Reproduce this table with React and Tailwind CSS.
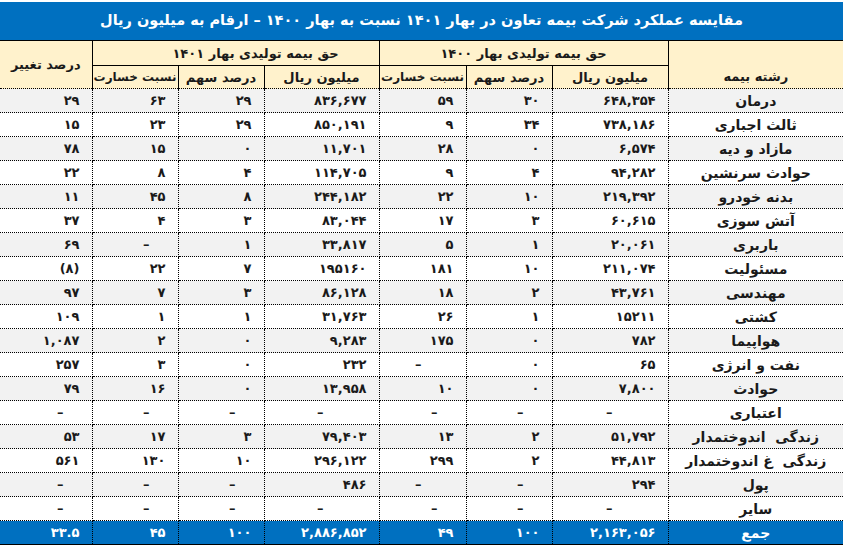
import React from "react";

const W = [92, 86, 86, 115, 87, 86, 116, 175];

// visual LTR order: change, r1401, s1401, m1401, r1400, s1400, m1400, label
const rows = [
  ["۲۹", "۶۳", "۲۹", "۸۳۶,۶۷۷", "۵۹", "۳۰", "۶۴۸,۳۵۴", "درمان"],
  ["۱۵", "۲۳", "۲۹", "۸۵۰,۱۹۱", "۹", "۳۴", "۷۳۸,۱۸۶", "ثالث اجباری"],
  ["۷۸", "۱۵", "۰", "۱۱,۷۰۱", "۲۸", "۰", "۶,۵۷۴", "مازاد و دیه"],
  ["۲۲", "۸", "۴", "۱۱۴,۷۰۵", "۹", "۴", "۹۴,۲۸۲", "حوادث سرنشین"],
  ["۱۱", "۴۵", "۸", "۲۴۴,۱۸۲", "۲۲", "۱۰", "۲۱۹,۳۹۲", "بدنه خودرو"],
  ["۳۷", "۴", "۳", "۸۳,۰۴۴", "۱۷", "۳", "۶۰,۶۱۵", "آتش سوزی"],
  ["۶۹", "–", "۱", "۳۳,۸۱۷", "۵", "۱", "۲۰,۰۶۱", "باربری"],
  ["(۸)", "۲۲", "۷", "۱۹۵۱۶۰", "۱۸۱", "۱۰", "۲۱۱,۰۷۴", "مسئولیت"],
  ["۹۷", "۷", "۳", "۸۶,۱۲۸", "۱۸", "۲", "۴۳,۷۶۱", "مهندسی"],
  ["۱۰۹", "۱", "۱", "۳۱,۷۶۳", "۲۶", "۱", "۱۵۲۱۱", "کشتی"],
  ["۱,۰۸۷", "۲", "۰", "۹,۲۸۳", "۱۷۵", "۰", "۷۸۲", "هواپیما"],
  ["۲۵۷", "۳", "۰", "۲۳۲", "–L", "۰", "۶۵", "نفت و انرژی"],
  ["۷۹", "۱۶", "۰", "۱۳,۹۵۸", "۱۰", "۰", "۷,۸۰۰", "حوادث"],
  ["–", "–", "–", "–", "–", "–", "–", "اعتباری"],
  ["۵۳", "۱۷", "۳", "۷۹,۴۰۳", "۱۳", "۲", "۵۱,۷۹۲", "زندگی\u00a0\u00a0اندوختمدار"],
  ["۵۶۱", "۱۳۰", "۱۰", "۲۹۶,۱۲۲", "۲۹۹", "۲", "۴۴,۸۱۳", "زندگی\u00a0\u00a0غ اندوختمدار"],
  ["–", "–", "–", "۴۸۶", "–L", "–", "۲۹۴", "پول"],
  ["–", "–", "–", "–", "–", "–", "–", "سایر"],
];

const total = ["۳۳.۵", "۴۵", "۱۰۰", "۲,۸۸۶,۸۵۲", "۴۹", "۱۰۰", "۲,۱۶۳,۰۵۶", "جمع"];

function DataCell({ v, i, isTotal }) {
  const wide = i === 3 || i === 6;
  let pad = "pr-3";
  let content = v;
  if (v === "–") pad = wide ? "pr-[55px]" : "pr-[28px]";
  if (v === "–L") {
    content = "–";
    pad = "pr-[44px]";
  }
  const edge = i === 0 ? "border-l-0" : i === 7 ? "border-r-0" : "";
  const bottom = isTotal ? "[border-bottom-style:solid]" : "";
  if (i === 7) {
    return (
      <td
        className={`h-[24px] p-0 border border-dotted border-black ${edge} ${bottom} text-center text-[14px] font-bold leading-none whitespace-nowrap`}
      >
        <span dir="rtl" className="whitespace-pre">{content}</span>
      </td>
    );
  }
  return (
    <td
      className={`h-[24px] p-0 ${pad} border border-dotted border-black ${edge} ${bottom} text-right text-[13px] font-bold leading-none whitespace-nowrap`}
    >
      {content}
    </td>
  );
}

export default function App() {
  return (
    <div className="w-[843px] h-[547px] bg-white pt-[2px] font-['DejaVu_Sans',sans-serif] text-[#1a1a1a] overflow-hidden">
      <div className="h-[38px] bg-[#0070c0] flex items-center justify-center text-white font-bold text-[14.5px]">
        <span dir="rtl">
          مقایسه عملکرد شرکت بیمه تعاون در بهار ۱۴۰۱ نسبت به بهار ۱۴۰۰ – ارقام به میلیون ریال
        </span>
      </div>
      <table className="w-[843px] table-fixed border-collapse">
        <colgroup>
          {W.map((w, i) => (
            <col key={i} style={{ width: w }} />
          ))}
        </colgroup>
        <thead>
          <tr className="bg-[#fff2cc]">
            <th
              rowSpan={2}
              className="p-0 border border-solid border-black border-l-0 [border-bottom-style:dotted] text-[13px] font-bold leading-none whitespace-nowrap"
            >
              <span dir="rtl">درصد تغییر</span>
            </th>
            <th
              colSpan={3}
              className="h-[25px] p-0 pl-[40px] border border-solid border-black text-[13px] font-bold leading-none whitespace-nowrap"
            >
              <span dir="rtl">حق بیمه تولیدی بهار ۱۴۰۱</span>
            </th>
            <th
              colSpan={3}
              className="h-[25px] p-0 border border-solid border-black text-[13px] font-bold leading-none whitespace-nowrap"
            >
              <span dir="rtl">حق بیمه تولیدی بهار ۱۴۰۰</span>
            </th>
            <th
              rowSpan={2}
              className="p-0 pt-[24px] border border-solid border-black border-r-0 [border-bottom-style:dotted] text-[13px] font-bold leading-none whitespace-nowrap"
            >
              <span dir="rtl">رشته بیمه</span>
            </th>
          </tr>
          <tr className="bg-[#fff2cc]">
            {["نسبت خسارت", "درصد سهم", "میلیون ریال", "نسبت خسارت", "درصد سهم", "میلیون ریال"].map(
              (t, i) => (
                <th
                  key={i}
                  className={`h-[23px] p-0 border border-solid border-black [border-bottom-style:dotted] ${
                    i % 3 === 0 ? "text-[12px]" : "text-[13px]"
                  } font-bold leading-none whitespace-nowrap`}
                >
                  <span dir="rtl">{t}</span>
                </th>
              )
            )}
          </tr>
        </thead>
        <tbody>
          {rows.map((r, ri) => (
            <tr key={ri} className={ri % 2 === 0 ? "bg-[#f2f2f2]" : "bg-white"}>
              {r.map((v, i) => (
                <DataCell key={i} v={v} i={i} />
              ))}
            </tr>
          ))}
          <tr className="bg-[#0070c0] text-white">
            {total.map((v, i) => (
              <DataCell key={i} v={v} i={i} isTotal />
            ))}
          </tr>
        </tbody>
      </table>
    </div>
  );
}
